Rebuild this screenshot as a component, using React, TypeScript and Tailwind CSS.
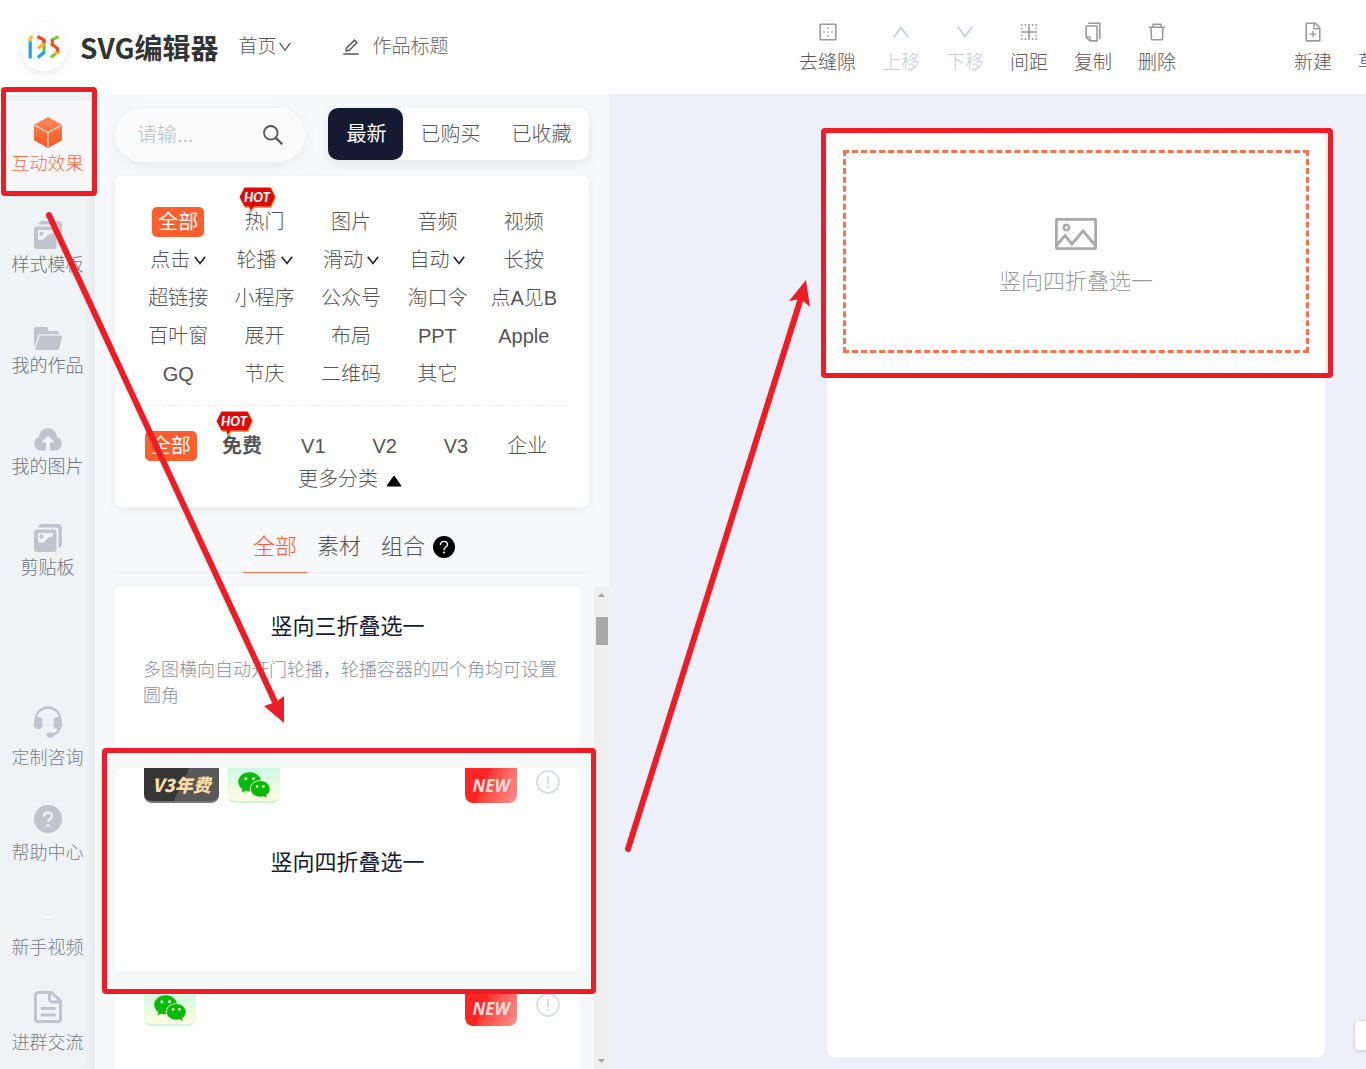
import React from 'react';
import {
  AiOutlineBorderInner,
  AiOutlineBorderOuter,
  AiOutlineCopy,
  AiOutlineDelete,
  AiOutlineDown,
  AiOutlineEdit,
  AiOutlineFile,
  AiOutlineFileAdd,
  AiOutlineUp,
  AiFillWechat,
} from 'react-icons/ai';

/* ---------- Icons ---------- */

const LogoIcon = () => (
  <svg width="32" height="24" viewBox="0 0 32 24" fill="none" strokeWidth="3.2" aria-hidden="true">
    <path d="M2.2 23.5V5" stroke="#1ba4e8" />
    <path d="M2.2 7V3.5L4 .8" stroke="#f9c514" />
    <path d="M16 5v8" stroke="#8cc63f" />
    <path d="M9.500 1.500L16 5v3" stroke="#ee4a24" />
    <path d="M10 13.500L15.500 9" stroke="#f9b414" />
    <path d="M16 11.500V19" stroke="#5fbf6f" />
    <path d="M16 17.500L9.800 22.500" stroke="#1ba4e8" />
    <path d="M30.500 1.500L24 5" stroke="#8cc63f" />
    <path d="M24.200 4V11" stroke="#f15a22" />
    <path d="M23.500 9L29.500 13.500V18" stroke="#ee4a24" />
    <path d="M29.500 17L26 20" stroke="#f9b414" />
    <path d="M27 19L22.800 22.500" stroke="#8cc63f" />
  </svg>
);

const CubeIcon = () => (
  <svg width="28" height="31" viewBox="0 0 28 31" aria-hidden="true">
    <defs>
      <linearGradient id="cube" x1="0" y1="0" x2="0" y2="1">
        <stop offset="0" stopColor="#ff8a63" />
        <stop offset="1" stopColor="#fb5316" />
      </linearGradient>
    </defs>
    <path d="M14 0l14 7.700v15.600L14 31 0 23.300V7.700z" fill="url(#cube)" />
    <path d="M1 8.300l13 7.200 13-7.200M14 15.500V30" stroke="#ffd9cb" strokeWidth="1.400" fill="none" />
  </svg>
);

const TemplateIcon = () => (
  <svg width="28" height="28" viewBox="0 0 28 28" fill="#c0c4ce" aria-hidden="true">
    <path d="M7 0h17a4 4 0 0 1 4 4v16a4 4 0 0 1-3.500 4V6.500a3 3 0 0 0-3-3H4.200A4 4 0 0 1 7 0z" />
    <path
      fillRule="evenodd"
      d="M3 5.500h16.500a3 3 0 0 1 3 3V25a3 3 0 0 1-3 3H3a3 3 0 0 1-3-3V8.500a3 3 0 0 1 3-3zm1 3.500v9.500c3 .5 5 1 7-1.500s4-5 8-4.500V9zm3.500 1.600a2.100 2.100 0 1 1 0 4.200 2.100 2.100 0 0 1 0-4.200z"
    />
  </svg>
);

const FolderIcon = () => (
  <svg width="28" height="23" viewBox="0 0 28 23" fill="#c0c4ce" aria-hidden="true">
    <path d="M2 0h10a2 2 0 0 1 2 2l1 2h8a2 2 0 0 1 2 2v1.200H7A3 3 0 0 0 4 9.500L0 21V2a2 2 0 0 1 2-2z" />
    <path d="M7.500 8.500h19a1.500 1.500 0 0 1 1.500 2l-2.700 10.800A2.200 2.200 0 0 1 23 23H3a1.500 1.500 0 0 1-1.500-2L5.200 10a2.300 2.300 0 0 1 2.300-1.500z" />
  </svg>
);

const CloudIcon = () => (
  <svg width="28" height="23" viewBox="0 0 28 23" aria-hidden="true">
    <path
      d="M7 22.500a7 7 0 0 1-2-13.600C5.500 3.700 9.200 0 14 0s8.500 3.700 9 8.900a7 7 0 0 1-2 13.600z"
      fill="#c0c4ce"
    />
    <path d="M14 7.500l6.500 7H16V23h-4v-8.500H7.500z" fill="#eff3f6" />
  </svg>
);

const HeadsetIcon = () => (
  <svg width="28" height="32" viewBox="0 0 28 32" fill="none" aria-hidden="true">
    <path d="M2 14v-1a12 11.500 0 0 1 24 0v6c0 5-3 9-9 10" stroke="#c0c4ce" strokeWidth="2.400" />
    <rect x="0" y="11" width="8.500" height="12" rx="4" fill="#c0c4ce" />
    <rect x="19.500" y="11" width="8.500" height="12" rx="4" fill="#c0c4ce" />
    <rect x="12.500" y="26.500" width="7.500" height="5" rx="2.500" fill="#c0c4ce" />
  </svg>
);

const HelpIcon = () => (
  <svg width="28" height="28" viewBox="0 0 28 28" fill="none" aria-hidden="true">
    <circle cx="14" cy="14" r="14" fill="#c0c4ce" />
    <path d="M10 11.500c0-5 8-5 8-.5 0 2.800-4 2.800-4 6" stroke="#eff3f6" strokeWidth="2.200" />
    <circle cx="14" cy="20.500" r="1.500" fill="#eff3f6" />
  </svg>
);

const VideoIcon = () => (
  <svg width="10" height="10" viewBox="0 0 10 10" stroke="#e9ebee" aria-hidden="true">
    <path d="M0 1.500h10M1 5h8M2 8.500h6" />
  </svg>
);

const GroupIcon = () => (
  <svg width="28" height="32" viewBox="0 0 28 32" fill="none" stroke="#c0c4ce" aria-hidden="true">
    <path
      d="M4 1.500h13.500l9 8.500v18a2.500 2.500 0 0 1-2.500 2.500H4A2.500 2.500 0 0 1 1.500 28V4A2.500 2.500 0 0 1 4 1.500z"
      strokeWidth="3"
    />
    <path d="M15.500 2v6a3 3 0 0 0 3 3h8" strokeWidth="3" />
    <path d="M8 17.500h12.500M8 24h12.500" strokeWidth="2.800" strokeLinecap="round" />
  </svg>
);

const SearchIcon = () => (
  <svg width="20" height="20" viewBox="0 0 20 20" fill="none" stroke="#555" strokeWidth="1.800" aria-hidden="true">
    <circle cx="7.800" cy="7.800" r="6.800" />
    <path d="M12.600 12.600L19.300 19.300" strokeWidth="2.200" />
  </svg>
);

const CaretIcon = () => (
  <svg width="12" height="9" viewBox="0 0 12 9" fill="none" stroke="#222" strokeWidth="1.600" aria-hidden="true">
    <path d="M.8.8L6 7.500 11.200.8" />
  </svg>
);

const ImageIcon = () => (
  <svg width="42" height="32" viewBox="0 0 42 32" fill="none" stroke="#aaa" strokeWidth="2.800" aria-hidden="true">
    <rect x="1.400" y="1.400" width="39.200" height="29.200" rx=".5" />
    <circle cx="11.500" cy="9.500" r="2.800" strokeWidth="2.400" />
    <path d="M1.500 27.500L10 17.500 17 26 28 13 40.500 27.500" />
  </svg>
);

const HotBadge = () => (
  <svg className="absolute -top-5 -left-1.5" width="37" height="26" viewBox="0 0 37 26" aria-hidden="true">
    <path d="M6 1.500h26.500l4.500 8-4.500 11.500H15.500l-3.500 4.500-1.500-4.500H6l-5-11z" fill="#f9a13a" />
    <path d="M5.500.5h26l4.500 9.500-4.500 9.500H14.500l-3 4.500-1-4.500h-5L.500 10z" fill="#de0a0a" />
    <text
      x="18"
      y="15"
      textAnchor="middle"
      fontSize="13"
      fontWeight="900"
      fontStyle="italic"
      fontFamily="Lato, sans-serif"
      fill="#fff"
    >
      HOT
    </text>
  </svg>
);

/* ---------- Header ---------- */

interface Tool {
  label: string;
  icon: React.ReactNode;
  disabled?: boolean;
  spaced?: boolean;
}

const tools: Tool[] = [
  { label: '去缝隙', icon: <AiOutlineBorderOuter /> },
  { label: '上移', icon: <AiOutlineUp />, disabled: true },
  { label: '下移', icon: <AiOutlineDown />, disabled: true },
  { label: '间距', icon: <AiOutlineBorderInner /> },
  { label: '复制', icon: <AiOutlineCopy /> },
  { label: '删除', icon: <AiOutlineDelete /> },
  { label: '新建', icon: <AiOutlineFileAdd />, spaced: true },
  { label: '草稿', icon: <AiOutlineFile /> },
];

const Header = () => (
  <header className="flex h-[94px] shrink-0 items-center overflow-hidden bg-white text-[19px] text-[#555]">
    <div className="flex w-[799px] shrink-0 items-center pl-5">
      <div className="flex size-12 items-center justify-center rounded-full bg-white shadow-[0_3px_8px_rgba(0,0,0,0.08)]">
        <LogoIcon />
      </div>
      <h1 className="ml-3 text-[28px] font-bold text-[#333] font-['Noto_Sans_CJK_SC',sans-serif]">SVG编辑器</h1>
      <button type="button" className="ml-5 flex items-center">
        首页
        <AiOutlineDown className="size-4" />
      </button>
      <label className="ml-12 flex items-center gap-3">
        <AiOutlineEdit className="size-5" />
        <input
          type="text"
          aria-label="作品标题"
          placeholder="作品标题"
          className="w-40 outline-none placeholder:text-[#666]"
        />
      </label>
    </div>
    <div className="flex shrink-0 gap-[26px] pt-1">
      {tools.map((tool) => (
        <button
          key={tool.label}
          type="button"
          disabled={tool.disabled}
          className={`flex shrink-0 flex-col items-center gap-1.5 disabled:text-[#c5ced8] ${tool.spaced ? 'ml-[92px]' : ''}`}
        >
          <span className={`text-[22px] ${tool.disabled ? '' : 'text-[#999]'}`}>{tool.icon}</span>
          <span className="leading-7">{tool.label}</span>
        </button>
      ))}
    </div>
  </header>
);

/* ---------- Sidebar ---------- */

const mainNav = [
  { label: '互动效果', icon: <CubeIcon />, active: true },
  { label: '样式模板', icon: <TemplateIcon /> },
  { label: '我的作品', icon: <FolderIcon /> },
  { label: '我的图片', icon: <CloudIcon /> },
  { label: '剪贴板', icon: <TemplateIcon /> },
];

const helpNav = [
  { label: '定制咨询', icon: <HeadsetIcon /> },
  { label: '帮助中心', icon: <HelpIcon /> },
  { label: '新手视频', icon: <VideoIcon /> },
  { label: '进群交流', icon: <GroupIcon /> },
];

const Sidebar = () => (
  <nav className="flex w-[95px] shrink-0 flex-col bg-[#eff3f6] pt-[7px] text-[18px] leading-6 shadow-[inset_-8px_0_10px_-4px_rgba(0,0,0,0.04)]">
    <div className="flex flex-col gap-2">
      {mainNav.map((item) => (
        <button
          key={item.label}
          type="button"
          className={`flex h-[93px] flex-col items-center justify-end gap-1 pb-[18px] ${
            item.active ? 'bg-[#f8f8fa] text-[#ff6a45]' : 'text-[#6b737c]'
          }`}
        >
          {item.icon}
          {item.label}
        </button>
      ))}
    </div>
    <div className="mt-auto flex flex-col text-[#7b8087]">
      {helpNav.map((item) => (
        <button key={item.label} type="button" className="flex h-[95px] flex-col items-center justify-end gap-2 pb-3.5">
          {item.icon}
          {item.label}
        </button>
      ))}
    </div>
  </nav>
);

/* ---------- Filters ---------- */

interface Filter {
  label: string;
  active?: boolean;
  hot?: boolean;
  menu?: boolean;
  bold?: boolean;
}

const categories: Filter[] = [
  { label: '全部', active: true },
  { label: '热门', hot: true },
  { label: '图片' },
  { label: '音频' },
  { label: '视频' },
  { label: '点击', menu: true },
  { label: '轮播', menu: true },
  { label: '滑动', menu: true },
  { label: '自动', menu: true },
  { label: '长按' },
  { label: '超链接' },
  { label: '小程序' },
  { label: '公众号' },
  { label: '淘口令' },
  { label: '点A见B' },
  { label: '百叶窗' },
  { label: '展开' },
  { label: '布局' },
  { label: 'PPT' },
  { label: 'Apple' },
  { label: 'GQ' },
  { label: '节庆' },
  { label: '二维码' },
  { label: '其它' },
];

const levels: Filter[] = [
  { label: '全部', active: true },
  { label: '免费', hot: true, bold: true },
  { label: 'V1' },
  { label: 'V2' },
  { label: 'V3' },
  { label: '企业' },
];

const FilterButton = ({ label, active, hot, menu, bold }: Filter) => (
  <div className="flex h-[38px] items-center justify-center">
    <button
      type="button"
      className={`relative flex items-center gap-1 whitespace-nowrap leading-[30px] ${
        active ? 'rounded-[5px] bg-[#fc5e2d] px-1.5 font-normal text-white' : ''
      } ${bold ? 'font-bold' : ''}`}
    >
      {label}
      {menu && <CaretIcon />}
      {hot && <HotBadge />}
    </button>
  </div>
);

const FilterCard = () => (
  <section className="mt-3.5 rounded-md bg-white px-5 pt-[27px] pb-3.5 text-[20px] text-[#555] shadow-[0_3px_10px_rgba(0,0,0,0.06)]">
    <div className="mr-0.5 grid grid-cols-5">
      {categories.map((item) => (
        <FilterButton key={item.label} {...item} />
      ))}
    </div>
    <hr className="mt-3 ml-2 border-dashed border-[#eee]" />
    <div className="mt-[21px] mr-1.5 grid grid-cols-6">
      {levels.map((item) => (
        <FilterButton key={item.label} {...item} />
      ))}
    </div>
    <button type="button" className="mx-auto flex items-center gap-2 pr-1 leading-7">
      更多分类
      <svg width="16" height="12" viewBox="0 0 16 12" className="mt-1" aria-hidden="true">
        <path d="M8 1l7 10H1z" fill="#000" stroke="#000" strokeLinejoin="round" />
      </svg>
    </button>
  </section>
);

/* ---------- Material list ---------- */

const WechatBadge = () => (
  <span className="flex h-[35px] w-[52px] items-center justify-center rounded-b-lg border-b-2 border-[#cdf3dc] bg-linear-to-b from-[#cdf8e4] to-[#fdfde0]">
    <AiFillWechat className="size-9 text-[#09bb07]" />
  </span>
);

interface MaterialCardProps {
  title?: string;
  annual?: boolean;
}

const MaterialCard = ({ title, annual }: MaterialCardProps) => (
  <article className="h-[203px] shrink-0 rounded-md bg-white">
    <div className="flex items-start pr-5 pl-[29px]">
      {annual && (
        <span className="mr-[9px] flex h-[35px] w-[75px] items-center justify-center rounded-b-lg border-b-2 border-[#777] bg-linear-115 from-[#363636] from-50% to-[#585858] to-50% text-[18px] font-black italic text-[#f8dba6] font-['Noto_Sans_CJK_SC',sans-serif]">
          V3年费
        </span>
      )}
      <WechatBadge />
      <span className="ml-auto flex h-[35px] w-[52px] items-center justify-center rounded-b-lg bg-linear-115 from-[#ff2525] from-35% to-[#f59090] text-[17px] font-bold italic text-[#f6dede] font-['Open_Sans',sans-serif]">
        NEW
      </span>
      <button type="button" aria-label="详情" className="mt-0.5 ml-[19px]">
        <svg width="24" height="24" viewBox="0 0 24 24" fill="none" stroke="#d9dde7" strokeWidth="1.800">
          <circle cx="12" cy="12" r="11" />
          <path d="M12 6v8M12 16v2" strokeWidth="2" />
        </svg>
      </button>
    </div>
    {title && <h3 className="mt-11 text-center text-[22px] font-normal leading-8 text-[#141b33]">{title}</h3>}
  </article>
);

const ScrollTrack = () => (
  <div className="flex w-[15px] shrink-0 flex-col items-center bg-[#efefef] py-1.5" aria-hidden="true">
    <svg width="7" height="4" viewBox="0 0 7 4">
      <path d="M0 4L3.500 0 7 4z" fill="#a3a3a3" />
    </svg>
    <div className="mt-5 h-7 w-3 bg-[#a8a8a8]" />
    <svg width="7" height="4" viewBox="0 0 7 4" className="mt-auto">
      <path d="M0 0l3.500 4L7 0z" fill="#a3a3a3" />
    </svg>
  </div>
);

const Panel = () => (
  <div className="flex w-[514px] shrink-0 flex-col bg-[#f7f8fa] pl-5">
    <div className="pr-5">
      <div className="flex items-start justify-between pt-3.5 text-[20px]">
        <label className="flex h-[54px] w-[190px] items-center rounded-full bg-[#fbfbfb] px-[22px] shadow-[0_4px_14px_rgba(0,0,0,0.06)]">
          <input
            type="text"
            aria-label="搜索"
            placeholder="请输..."
            className="min-w-0 flex-1 outline-none placeholder:text-[#b9bec8]"
          />
          <SearchIcon />
        </label>
        <div className="flex h-[52px] w-[261px] rounded-[10px] bg-white text-[#555] shadow-[0_4px_12px_rgba(0,0,0,0.08)]">
          <button type="button" className="w-[75px] rounded-[10px] bg-[#141b33] pl-0.5 font-normal text-white">
            最新
          </button>
          <button type="button" className="flex-1 pl-0.5">
            已购买
          </button>
          <button type="button" className="flex-1 pr-0.5">
            已收藏
          </button>
        </div>
      </div>
      <FilterCard />
      <div className="mt-3.5 flex justify-center border-b border-[#e6e9ec] pl-1 text-[22px] text-[#555]">
        <button type="button" className="-mb-px h-[52px] border-b border-[#ff6a45] px-2.5 text-[#ff5a30]">
          全部
        </button>
        <button type="button" className="px-2.5">
          素材
        </button>
        <button type="button" className="flex items-center gap-2 px-2.5">
          组合
          <svg width="22" height="22" viewBox="0 0 22 22" fill="none" aria-hidden="true">
            <circle cx="11" cy="11" r="11" fill="#000" />
            <path d="M7.500 9c0-4.800 7-4.600 7-.6 0 2.600-3.500 2.600-3.500 5.600" stroke="#fff" strokeWidth="1.400" />
            <circle cx="11" cy="16.500" r="1" fill="#fff" />
          </svg>
        </button>
      </div>
    </div>
    <div className="mt-3.5 flex min-h-0 flex-1">
      <div className="mr-3.5 flex min-w-0 flex-1 flex-col gap-5 overflow-hidden">
        <article className="h-[161px] shrink-0 rounded-b-md bg-white px-7 pt-6">
          <h3 className="text-center text-[22px] font-normal leading-8 text-[#141b33]">竖向三折叠选一</h3>
          <p className="mt-3.5 -mr-2 text-[18px] leading-[26px] text-[#87909b]">
            多图横向自动开门轮播，轮播容器的四个角均可设置圆角
          </p>
        </article>
        <MaterialCard title="竖向四折叠选一" annual />
        <MaterialCard />
      </div>
      <ScrollTrack />
    </div>
  </div>
);

/* ---------- Canvas ---------- */

const Canvas = () => (
  <main className="flex min-w-0 flex-1 overflow-hidden bg-[#edf0f8] pt-10 pr-[41px] pb-3 pl-[218px]">
    <div className="flex-1 rounded-lg bg-white p-4">
      <div className="flex h-[203px] flex-col items-center justify-center gap-4 border-3 border-dashed border-[#fb6f4b] pt-3">
        <ImageIcon />
        <p className="text-[22px] leading-8 text-[#999]">竖向四折叠选一</p>
      </div>
    </div>
  </main>
);

/* ---------- Tutorial marks drawn over the editor ---------- */

const Marks = () => (
  <div className="pointer-events-none absolute inset-0" aria-hidden="true">
    <div className="absolute top-[87px] left-px h-[109px] w-24 rounded-sm border-5 border-[#ee1c24]" />
    <div className="absolute top-[748px] left-[102px] h-[246px] w-[494px] rounded-sm border-5 border-[#ee1c24]" />
    <div className="absolute top-[128px] left-[821px] h-[250px] w-[512px] rounded-sm border-5 border-[#ee1c24]" />
    <svg className="absolute inset-0" width="1366" height="1069" fill="#ee1c24" stroke="#ee1c24">
      <path d="M49 215L276 704" strokeWidth="6" strokeLinecap="round" />
      <path d="M284 723L264 706 276 702 284 696z" stroke="none" />
      <path d="M628 849L801 298" strokeWidth="6" strokeLinecap="round" />
      <path d="M806 280L789 301 801 299 810 307z" stroke="none" />
    </svg>
  </div>
);

const App: React.FC = () => {
  return (
    <div className="relative flex h-screen flex-col overflow-hidden font-light font-['Liberation_Sans','Noto_Sans_CJK_SC',sans-serif]">
      <Header />
      <div className="flex min-h-0 flex-1">
        <Sidebar />
        <Panel />
        <Canvas />
      </div>
      <div className="absolute right-0 bottom-[18px] h-[31px] w-3 rounded-l border border-r-0 border-[#ddd] bg-white shadow-sm" />
      <Marks />
    </div>
  );
};

export default App;
